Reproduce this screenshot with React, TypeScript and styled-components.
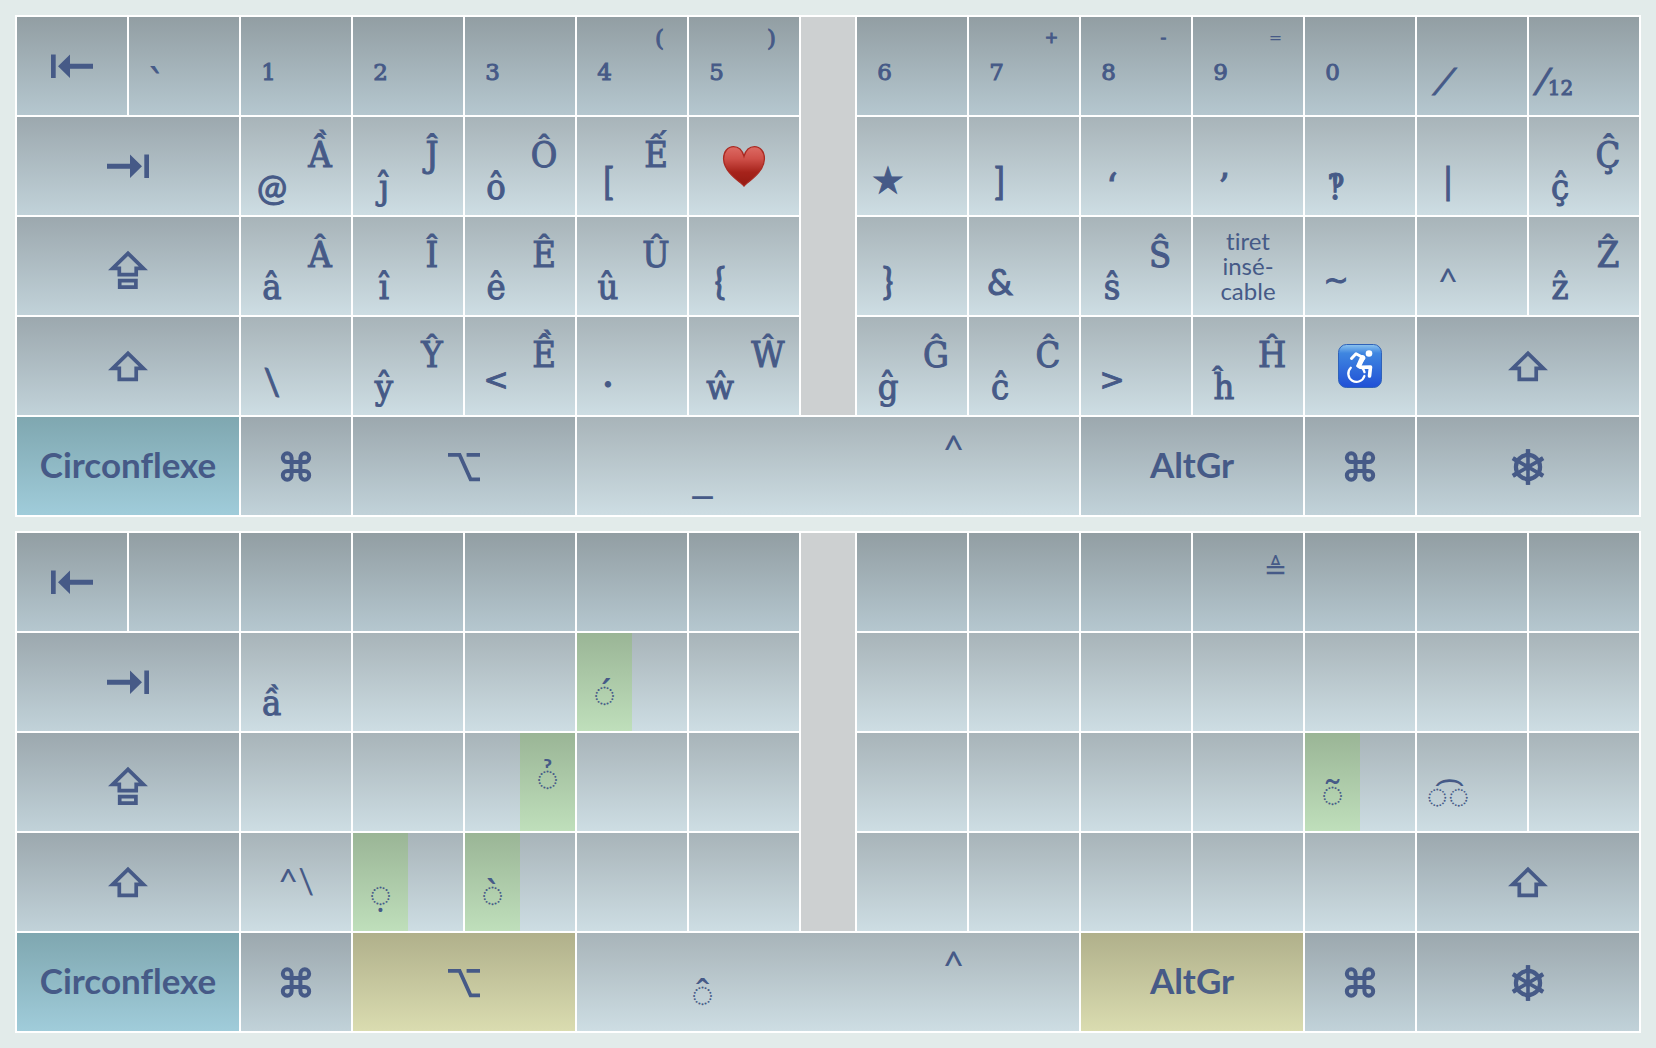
import React from "react";
import styled, { createGlobalStyle, css } from "styled-components";

const ink = "#465a87";

const GlobalStyle = createGlobalStyle`
  *, *::before, *::after { box-sizing: border-box; }
  body { margin: 0; background: #e2ebea; }
`;

type Tone = "number" | "letter" | "modifier" | "dead" | "alt";
type Face = "serif" | "wide" | "sans" | "symbol" | "mark";
type Level =
  | "upper"
  | "lower"
  | "sign"
  | "math"
  | "caret"
  | "baseline"
  | "digit"
  | "small"
  | "tiny"
  | "relation"
  | "fraction"
  | "accent"
  | "raised"
  | "tie";

const tones: Record<Tone, string> = {
  number: "linear-gradient(#929ea3, #b5c7cf)",
  letter: "linear-gradient(#a8b4b9, #cddde3)",
  modifier: "linear-gradient(#9ca8ae, #c1d2d9)",
  dead: "linear-gradient(#7fa7b0, #a0ccda)",
  alt: "linear-gradient(#b0b08b, #dadcb0)",
};

const lato = 'Lato, "Open Sans", sans-serif';

const faces: Record<Face, string> = {
  serif: '"DejaVu Serif Condensed", "DejaVu Serif", serif',
  wide: '"DejaVu Serif", serif',
  sans: lato,
  symbol: '"DejaVu Sans", sans-serif',
  mark: '"Noto Sans", "DejaVu Sans", sans-serif',
};

const levels: Record<Level, ReturnType<typeof css>> = {
  upper: css`padding-top: 18px; font-size: 36px;`,
  lower: css`padding-top: 50px; font-size: 36px;`,
  sign: css`padding-top: 44px; font-size: 36px;`,
  math: css`padding-top: 43px; font-size: 30px;`,
  caret: css`padding-top: 12px; font-size: 38px;`,
  baseline: css`padding-top: 38px; font-size: 40px;`,
  digit: css`padding-top: 35px; font-size: 23px;`,
  small: css`padding-top: 1px; font-size: 23px;`,
  tiny: css`padding-top: 1px; font-size: 16px;`,
  relation: css`padding-top: 17px; font-size: 28px;`,
  fraction: css`padding-top: 46px; font-size: 36px;`,
  accent: css`padding-top: 39px; font-size: 38px;`,
  raised: css`padding-top: 23px; font-size: 38px;`,
  tie: css`padding-top: 42px; font-size: 36px;`,
};

const Page = styled.main`
  display: flex;
  flex-direction: column;
  gap: 14px;
  padding: 15px;
`;

const Board = styled.section`
  display: grid;
  grid-template-columns: repeat(7, minmax(0, 1fr)) 54px repeat(7, minmax(0, 1fr));
  grid-auto-rows: minmax(98px, auto);
  gap: 2px;
  padding: 2px;
  background: #fff;
`;

const Spine = styled.div`
  grid-column: 8;
  grid-row: 1 / span 4;
  background: #cdd0d1;
`;

const Key = styled.button<{ $tone: Tone; $span: number }>`
  display: grid;
  grid-template-columns: minmax(0, 1fr);
  grid-column: span ${(p) => p.$span};
  align-items: center;
  justify-items: center;
  margin: 0;
  padding: 0;
  border: 0;
  border-radius: 0;
  background: ${(p) => tones[p.$tone]};
  color: ${ink};
  font-family: ${lato};
  font-variant-ligatures: none;
`;

const SplitKey = styled(Key)<{ $inset: boolean }>`
  grid-template-columns: repeat(2, minmax(0, 1fr));
  align-items: stretch;
  justify-items: stretch;
  padding: 0 ${(p) => (p.$inset ? 7 : 0)}px;
`;

const Legend = styled.span<{ $level: Level; $face: Face; $lit?: boolean; $thin?: boolean }>`
  display: flex;
  justify-content: center;
  align-items: flex-start;
  height: 98px;
  line-height: 40px;
  white-space: nowrap;
  font-family: ${(p) => faces[p.$face]};
  ${(p) => levels[p.$level]}
  ${(p) => !p.$thin && p.$face !== "mark" && `-webkit-text-stroke: 1px ${ink};`}
  ${(p) => p.$lit && "background: linear-gradient(#9ab596, #bfdfbb);"}
`;

const Slanted = styled.span`
  font-style: italic;
`;

const Twelfth = styled.sub`
  padding: 5px 0 0 2px;
  font-size: 20px;
`;

const Name = styled.span<{ $light?: boolean }>`
  padding-bottom: 4px;
  font-size: 35px;
  font-weight: ${(p) => (p.$light ? 400 : 700)};
  line-height: 40px;
`;

const Note = styled.span`
  padding-bottom: 2px;
  font-size: 24px;
  line-height: 25px;
  text-align: center;
`;

const Glyph = styled.svg`
  display: block;
  width: 48px;
  height: 48px;
  overflow: visible;
  fill: none;
  stroke: ${ink};
  stroke-width: 3.7;
`;

type IconName = "backspace" | "tab" | "caps" | "shift" | "command" | "option" | "helm" | "heart" | "wheelchair";

const drawings: Record<IconName, React.ReactNode> = {
  backspace: (
    <g fill={ink} stroke="none">
      <path d="M3 12.5h4.7v23.5H3z" />
      <path d="M10 24.2 22 12.5v9.3h23v4.9H22V36z" />
    </g>
  ),
  tab: (
    <g fill={ink} stroke="none">
      <path d="M40.3 12.5H45V36h-4.7z" />
      <path d="M38 24.2 26 12.5v9.3H3v4.9h23V36z" />
    </g>
  ),
  caps: (
    <>
      <path d="M24 11.3 8.6 26.3h6.7v6.3h16.9v-6.3h7.2z" />
      <path d="M15.7 38.7h16.2v6.4H15.7z" />
    </>
  ),
  shift: <path d="M24 11.3 8.6 26.3h6.7v11h16.9v-11h7.2z" />,
  command: (
    <path
      transform="translate(6.4 6.9) scale(1.467)"
      strokeWidth="2.7"
      d="M15 6v12a3 3 0 1 0 3-3H6a3 3 0 1 0 3 3V6a3 3 0 1 0-3 3h12a3 3 0 1 0-3-3"
    />
  ),
  option: <path d="M8 12.9h11.6l11 24.4H40M26.6 12.9H40" />,
  helm: (
    <>
      <circle cx="24" cy="25" r="12.1" strokeWidth="4.2" />
      <circle cx="24" cy="25" r="3.6" fill={ink} stroke="none" />
      <path d="M24 7.2v35.6M10 16.9l28 16.2M38 16.9 10 33.1" strokeWidth="3.6" />
      <path
        d="M24 7.2v4M24 38.8v4M8.8 16.2l3.2 1.9M36 31.9l3.2 1.9M39.2 16.2 36 18.1M12 31.9l-3.2 1.9"
        strokeWidth="4.4"
      />
    </>
  ),
  heart: (
    <>
      <defs>
        <linearGradient id="heart-fill" x1="0" y1="0" x2="0" y2="1">
          <stop offset="0" stopColor="#dd6b64" />
          <stop offset="0.3" stopColor="#cf5049" />
          <stop offset="0.65" stopColor="#a6231b" />
          <stop offset="1" stopColor="#941a12" />
        </linearGradient>
      </defs>
      <path
        d="M24 44C21 40 4 31 3.6 17 3.4 9.5 8 4.7 13.5 4.7c5 0 8.8 3.6 10.5 9.6 1.7-6 5.5-9.6 10.5-9.6C40 4.7 44.6 9.5 44.4 17 44 31 27 40 24 44z"
        fill="url(#heart-fill)"
        stroke="#aa2a22"
        strokeWidth="1.3"
      />
    </>
  ),
  wheelchair: (
    <>
      <defs>
        <linearGradient id="chair-fill" x1="0" y1="0" x2="0" y2="1">
          <stop offset="0" stopColor="#8dc4ef" />
          <stop offset="0.2" stopColor="#3f86e0" />
          <stop offset="1" stopColor="#2050d6" />
        </linearGradient>
      </defs>
      <rect x="2.5" y="2.5" width="43" height="43" rx="8" fill="url(#chair-fill)" stroke="#2f62b8" strokeWidth="1" />
      <circle cx="33" cy="11.5" r="3.3" fill="#fff" stroke="none" />
      <g stroke="#fff" strokeLinecap="round" strokeLinejoin="round">
        <path d="M15.5 16.5l4.5-4.8 8 4.3-5.5 7.5" strokeWidth="3" />
        <path d="M26.5 15.5 23 23.5" strokeWidth="5" />
        <path d="M24 25.2l10.5-.2-1 9" strokeWidth="3.6" />
        <path d="M14.8 25.8a8.2 8.2 0 1 0 13.6 8.2" strokeWidth="2.3" />
        <path d="M21.5 24a8.2 8.2 0 0 1 7 6.2" strokeWidth="2.3" />
      </g>
    </>
  ),
};

const Icon = ({ name }: { name: IconName }) => (
  <Glyph viewBox="0 0 48 48" aria-hidden="true">
    {drawings[name]}
  </Glyph>
);

interface Mark {
  text: React.ReactNode;
  level?: Level;
  face?: Face;
  lit?: boolean;
  thin?: boolean;
}

interface KeySpec {
  tone?: Tone;
  span?: number;
  icon?: IconName;
  name?: string;
  light?: boolean;
  note?: React.ReactNode;
  label?: string;
  low?: Mark;
  high?: Mark;
  wide?: boolean;
}

const modifier = (icon: IconName, label: string, span = 2, tone: Tone = "modifier"): KeySpec => ({ tone, span, icon, label });
const named = (name: string, tone: Tone): KeySpec => ({ tone, span: 2, name });
const blanks = (count: number, tone: Tone = "letter"): KeySpec[] => Array.from({ length: count }, () => ({ tone }));
const capital = (text: string): Mark => ({ text, level: "upper" });
const letter = (low: string, high?: string): KeySpec => ({ low: { text: low }, high: high ? capital(high) : undefined });
const sign = (text: string, face: Face = "sans", level: Level = "sign", high?: string): KeySpec => ({
  low: { text, face, level },
  high: high ? capital(high) : undefined,
});
const digit = (low: string, high?: string, level: Level = "small"): KeySpec => ({
  tone: "number",
  wide: true,
  low: { text: low, level: "digit", face: "wide" },
  high: high ? { text: high, level, face: level === "tiny" ? "symbol" : "wide", thin: high === "=" } : undefined,
});
const accent = (text: string): KeySpec => ({ wide: true, low: { text, level: "accent", face: "mark", lit: true } });
const spaceBar = (low: Mark): KeySpec => ({
  span: 5,
  wide: true,
  low,
  high: { text: "^", face: "sans", level: "caret", thin: true },
});

const circumflexLayer: KeySpec[] = [
  modifier("backspace", "Effacement", 1, "number"),
  { tone: "number", wide: true, low: { text: "`", level: "fraction" } },
  digit("1"), digit("2"), digit("3"), digit("4", "("), digit("5", ")"),
  digit("6"), digit("7", "+", "tiny"), digit("8", "-", "tiny"), digit("9", "=", "tiny"), digit("0"),
  { tone: "number", wide: true, low: { text: <Slanted>⁄</Slanted>, level: "fraction", face: "wide" } },
  { tone: "number", wide: true, low: { text: <>⁄<Twelfth>12</Twelfth></>, level: "fraction", face: "wide" } },

  modifier("tab", "Tabulation"),
  sign("@", "sans", "lower", "Ầ"),
  letter("ĵ", "Ĵ"), letter("ô", "Ô"),
  sign("[", "sans", "sign", "Ế"),
  { icon: "heart", label: "Cœur" },
  sign("★", "symbol"), sign("]"), sign("‘", "wide", "lower"), sign("’", "wide", "lower"), sign("‽", "serif", "lower"), sign("|"),
  letter("ç̂", "Ç̂"),

  modifier("caps", "Verrouillage majuscule"),
  letter("â", "Â"), letter("î", "Î"), letter("ê", "Ê"), letter("û", "Û"), sign("{"),
  sign("}"), sign("&"), letter("ŝ", "Ŝ"),
  { note: <>tiret<br />insé-<br />cable</> },
  sign("~", "symbol", "math"),
  { low: { text: "^", face: "sans", level: "sign", thin: true } },
  letter("ẑ", "Ẑ"),

  modifier("shift", "Majuscule"),
  sign("\\"), letter("ŷ", "Ŷ"),
  sign("<", "symbol", "math", "Ề"),
  sign("·"), letter("ŵ", "Ŵ"),
  letter("ĝ", "Ĝ"), letter("ĉ", "Ĉ"), sign(">", "symbol", "math"), letter("ĥ", "Ĥ"),
  { icon: "wheelchair", label: "Accessibilité" },
  modifier("shift", "Majuscule"),

  named("Circonflexe", "dead"),
  modifier("command", "Commande", 1),
  modifier("option", "Option"),
  spaceBar({ text: "_", face: "symbol", level: "baseline", thin: true }),
  named("AltGr", "modifier"),
  modifier("command", "Commande", 1),
  modifier("helm", "Contrôle"),
];

const altLayer: KeySpec[] = [
  modifier("backspace", "Effacement", 1, "number"),
  ...blanks(9, "number"),
  { tone: "number", wide: true, high: { text: "≜", level: "relation", face: "symbol", thin: true } },
  ...blanks(3, "number"),

  modifier("tab", "Tabulation"),
  letter("ầ"), ...blanks(2), accent("◌́"), ...blanks(8),

  modifier("caps", "Verrouillage majuscule"),
  ...blanks(2),
  { wide: true, high: { text: "◌̉", level: "raised", face: "mark", lit: true } },
  ...blanks(6), accent("◌̃"), sign("◌͡◌", "mark", "tie"), ...blanks(1),

  modifier("shift", "Majuscule"),
  { name: "^\\", light: true },
  accent("◌̣"), accent("◌̀"), ...blanks(7),
  modifier("shift", "Majuscule"),

  named("Circonflexe", "dead"),
  modifier("command", "Commande", 1),
  modifier("option", "Option", 2, "alt"),
  spaceBar({ text: "◌̂", level: "accent", face: "mark" }),
  named("AltGr", "alt"),
  modifier("command", "Commande", 1),
  modifier("helm", "Contrôle"),
];

const LegendSlot = ({ mark }: { mark?: Mark }) =>
  mark ? (
    <Legend $level={mark.level ?? "lower"} $face={mark.face ?? "serif"} $lit={mark.lit} $thin={mark.thin}>
      {mark.text}
    </Legend>
  ) : (
    <span />
  );

const KeyCap = ({ spec }: { spec: KeySpec }) => {
  const tone = spec.tone ?? "letter";
  const span = spec.span ?? 1;
  if (spec.low || spec.high) {
    return (
      <SplitKey type="button" $tone={tone} $span={span} $inset={!spec.wide}>
        <LegendSlot mark={spec.low} />
        <LegendSlot mark={spec.high} />
      </SplitKey>
    );
  }
  return (
    <Key type="button" $tone={tone} $span={span} aria-label={spec.label}>
      {spec.icon && <Icon name={spec.icon} />}
      {spec.name && <Name $light={spec.light}>{spec.name}</Name>}
      {spec.note && <Note>{spec.note}</Note>}
    </Key>
  );
};

const Keyboard = ({ title, keys }: { title: string; keys: KeySpec[] }) => (
  <Board aria-label={title}>
    <Spine />
    {keys.map((spec, index) => (
      <KeyCap key={index} spec={spec} />
    ))}
  </Board>
);

export default function App() {
  return (
    <>
      <GlobalStyle />
      <Page>
        <Keyboard title="Circonflexe" keys={circumflexLayer} />
        <Keyboard title="Circonflexe + AltGr" keys={altLayer} />
      </Page>
    </>
  );
}
